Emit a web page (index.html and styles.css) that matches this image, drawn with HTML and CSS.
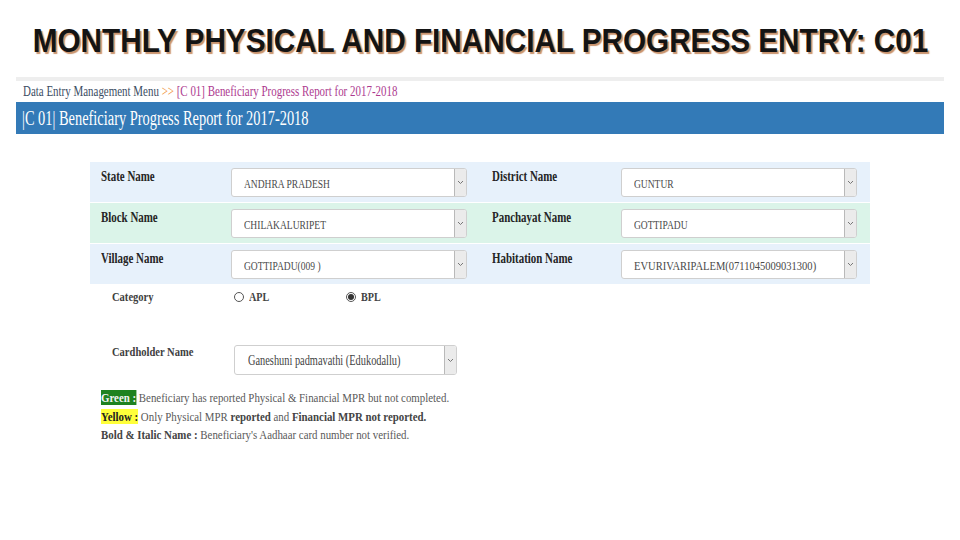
FILE: index.html
```html
<!DOCTYPE html>
<html>
<head>
<meta charset="utf-8">
<link rel="stylesheet" href="styles.css">
</head>
<body>
<div class="page">
  <h1 class="title"><span class="title-text">MONTHLY PHYSICAL AND FINANCIAL PROGRESS ENTRY: C01</span></h1>
  <div class="panel">
    <div class="rule"></div>
    <div class="crumb"><span class="sx"><span class="crumb-home">Data Entry Management Menu</span> <span class="crumb-sep">&gt;&gt;</span> <span class="crumb-cur">[C 01] Beneficiary Progress Report for 2017-2018</span></span></div>
    <div class="bar"><span class="sx">|C 01| Beneficiary Progress Report for 2017-2018</span></div>
    <div class="form">
      <div class="row blue">
        <div class="label"><span class="sx">State Name</span></div>
        <div class="sel"><div class="val"><span class="sx">ANDHRA PRADESH</span></div><span class="arr"><svg width="7" height="5" viewBox="0 0 7 5"><polyline points="1,1 3.5,3.5 6,1" fill="none" stroke="#777" stroke-width="1"/></svg></span></div>
        <div></div>
        <div class="label"><span class="sx">District Name</span></div>
        <div class="sel"><div class="val"><span class="sx">GUNTUR</span></div><span class="arr"><svg width="7" height="5" viewBox="0 0 7 5"><polyline points="1,1 3.5,3.5 6,1" fill="none" stroke="#777" stroke-width="1"/></svg></span></div>
      </div>
      <div class="row green">
        <div class="label"><span class="sx">Block Name</span></div>
        <div class="sel"><div class="val"><span class="sx">CHILAKALURIPET</span></div><span class="arr"><svg width="7" height="5" viewBox="0 0 7 5"><polyline points="1,1 3.5,3.5 6,1" fill="none" stroke="#777" stroke-width="1"/></svg></span></div>
        <div></div>
        <div class="label"><span class="sx">Panchayat Name</span></div>
        <div class="sel"><div class="val"><span class="sx">GOTTIPADU</span></div><span class="arr"><svg width="7" height="5" viewBox="0 0 7 5"><polyline points="1,1 3.5,3.5 6,1" fill="none" stroke="#777" stroke-width="1"/></svg></span></div>
      </div>
      <div class="row blue">
        <div class="label"><span class="sx">Village Name</span></div>
        <div class="sel"><div class="val"><span class="sx">GOTTIPADU(009 )</span></div><span class="arr"><svg width="7" height="5" viewBox="0 0 7 5"><polyline points="1,1 3.5,3.5 6,1" fill="none" stroke="#777" stroke-width="1"/></svg></span></div>
        <div></div>
        <div class="label"><span class="sx">Habitation Name</span></div>
        <div class="sel"><div class="val"><span class="sx wide">EVURIVARIPALEM(0711045009031300)</span></div><span class="arr"><svg width="7" height="5" viewBox="0 0 7 5"><polyline points="1,1 3.5,3.5 6,1" fill="none" stroke="#777" stroke-width="1"/></svg></span></div>
      </div>
      <div class="cat">
        <div class="plabel"><span class="sx">Category</span></div>
        <div class="radio"><span class="circle"></span><span class="sx rtext">APL</span></div>
        <div class="radio"><span class="circle on"></span><span class="sx rtext">BPL</span></div>
      </div>
      <div class="card">
        <div class="plabel"><span class="sx">Cardholder Name</span></div>
        <div class="sel card-sel"><div class="val"><span class="sx">Ganeshuni padmavathi (Edukodallu)</span></div><span class="arr"><svg width="7" height="5" viewBox="0 0 7 5"><polyline points="1,1 3.5,3.5 6,1" fill="none" stroke="#777" stroke-width="1"/></svg></span></div>
      </div>
      <div class="legend">
        <div class="line"><span class="sx"><b class="hl-green">Green :</b> Beneficiary has reported Physical &amp; Financial MPR but not completed.</span></div>
        <div class="line"><span class="sx"><b class="hl-yellow">Yellow :</b> Only Physical MPR <b>reported</b> and <b>Financial MPR not reported.</b></span></div>
        <div class="line"><span class="sx"><b>Bold &amp; Italic Name :</b> Beneficiary's Aadhaar card number not verified.</span></div>
      </div>
    </div>
  </div>
</div>
</body>
</html>
```
FILE: styles.css
```css
* { box-sizing: border-box; }
html, body { margin: 0; padding: 0; background: #fff; }
.page { width: 960px; height: 540px; overflow: hidden; font-family: "Liberation Serif", serif; }

.sx { display: inline-block; transform-origin: left center; white-space: nowrap; }

.title {
  margin: 0;
  height: 77px;
  padding-top: 5px;
  display: flex;
  align-items: center;
  justify-content: center;
  font-family: "Liberation Sans", Arial, sans-serif;
  font-weight: bold;
  font-size: 33px;
  color: #141414;
  text-shadow: 2px 2px 1px #c9936d;
}
.title-text { display: inline-block; transform: scaleX(0.9); white-space: nowrap; }

.panel { margin: 0 16px; }
.rule { height: 4px; background: #eeeeee; }

.crumb { height: 21px; line-height: 21px; padding-left: 7px; font-size: 14.5px; }
.crumb .sx { transform: scaleX(0.755); }
.crumb-home { color: #3b4d63; }
.crumb-sep { color: #ef8d2a; }
.crumb-cur { color: #ad3a8f; }

.bar { height: 32px; line-height: 32px; background: #337ab7; color: #fff; font-size: 20px; padding-left: 6px; }
.bar .sx { transform: scaleX(0.72); }

.form { margin: 28px 0 0 74px; width: 780px; }
.row {
  display: grid;
  grid-template-columns: 141px 236px 14px 140px 236px;
  height: 40px;
  margin-bottom: 1px;
}
.row.blue { background: #e7f1fb; }
.row.green { background: #dbf4e9; }

.label { padding: 7px 0 0 11px; font-weight: bold; font-size: 14px; line-height: 16px; color: #252525; }
.label .sx { transform: scaleX(0.78); }

.sel {
  margin-top: 6px;
  height: 29px;
  display: flex;
  background: #fff;
  border: 1px solid #cfcfcf;
  border-radius: 3px;
  min-width: 0;
}
.val { flex: 1; min-width: 0; overflow: hidden; padding: 7px 0 0 12px; font-size: 13.5px; line-height: 15px; color: #4a4a4a; }
.val .sx { transform: scaleX(0.705); }
.val .sx.wide { transform: scaleX(0.78); }
.arr {
  flex: none;
  width: 12px;
  border-left: 1px solid #b9b9b9;
  border-radius: 0 2px 2px 0;
  background: #ebebeb;
  display: flex;
  align-items: center;
  justify-content: center;
}

.cat {
  display: grid;
  grid-template-columns: 122px 112px auto;
  margin-top: 3px;
  height: 20px;
  line-height: 20px;
  padding-left: 22px;
  font-size: 13.5px;
  font-weight: bold;
  color: #444;
}
.plabel { font-weight: bold; font-size: 13.5px; color: #3e3e3e; }
.plabel .sx { transform: scaleX(0.78); }
.radio { display: flex; align-items: center; gap: 5px; }
.circle {
  width: 10px; height: 10px;
  border: 1px solid #555;
  border-radius: 50%;
  display: flex; align-items: center; justify-content: center;
}
.circle.on::after { content: ""; width: 6px; height: 6px; border-radius: 50%; background: #333; }
.rtext { transform: scaleX(0.75); }

.card {
  display: grid;
  grid-template-columns: 122px 223px;
  margin-top: 38px;
  padding-left: 22px;
  line-height: 14px;
}
.card-sel { margin-top: 0; height: 30px; }
.card-sel .val { color: #444; font-size: 14px; padding-left: 13px; }
.card-sel .val .sx { transform: scaleX(0.74); }

.legend { margin-top: 14px; padding-left: 11px; font-size: 13.5px; line-height: 18.5px; color: #5a5a5a; }
.legend .sx { transform: scaleX(0.805); }
.legend b { color: #444; }
.legend .hl-green { background: #1f821f; color: #f4f4f4; }
.legend .hl-yellow { background: #ffff3a; color: #222; }
```
